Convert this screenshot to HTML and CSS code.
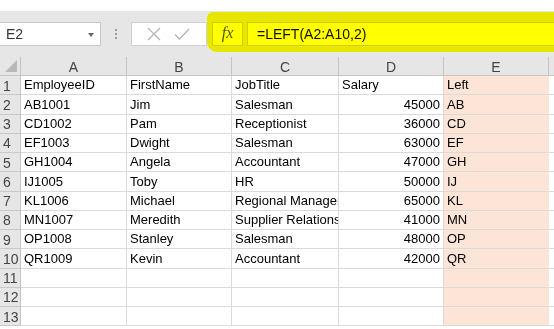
FILE: index.html
```html
<!DOCTYPE html>
<html>
<head>
<meta charset="utf-8">
<link rel="stylesheet" href="styles.css">
</head>
<body>
<div class="topgap"></div>
<div class="toolbar">
  <div class="namebox"><span class="nb-text">E2</span><span class="nb-arrow"></span></div>
  <div class="grip"><i></i><i></i><i></i></div>
  <div class="btns">
    <svg class="ico" width="16" height="16" viewBox="0 0 16 16"><path d="M2 2 L14 14 M14 2 L2 14" stroke="#b4b4b4" stroke-width="1.3" fill="none"/></svg>
    <svg class="ico" width="18" height="16" viewBox="0 0 18 16"><path d="M2 8.5 L6.5 13 L16 3" stroke="#b4b4b4" stroke-width="1.3" fill="none"/></svg>
  </div>
  <div class="fx">fx</div>
  <div class="formula">=LEFT(A2:A10,2)</div>
  <div class="highlight"></div>
</div>
<div class="sheet">
  <div class="hd corner"><span class="tri"></span></div>
  <div class="hd col">A</div><div class="hd col">B</div><div class="hd col">C</div><div class="hd col">D</div><div class="hd col">E</div><div class="hd col last"></div>

  <div class="hd rowh">1</div><div class="c">EmployeeID</div><div class="c">FirstName</div><div class="c">JobTitle</div><div class="c">Salary</div><div class="c e">Left</div><div class="c last"></div>
  <div class="hd rowh">2</div><div class="c">AB1001</div><div class="c">Jim</div><div class="c">Salesman</div><div class="c n">45000</div><div class="c e">AB</div><div class="c last"></div>
  <div class="hd rowh">3</div><div class="c">CD1002</div><div class="c">Pam</div><div class="c">Receptionist</div><div class="c n">36000</div><div class="c e">CD</div><div class="c last"></div>
  <div class="hd rowh">4</div><div class="c">EF1003</div><div class="c">Dwight</div><div class="c">Salesman</div><div class="c n">63000</div><div class="c e">EF</div><div class="c last"></div>
  <div class="hd rowh">5</div><div class="c">GH1004</div><div class="c">Angela</div><div class="c">Accountant</div><div class="c n">47000</div><div class="c e">GH</div><div class="c last"></div>
  <div class="hd rowh">6</div><div class="c">IJ1005</div><div class="c">Toby</div><div class="c">HR</div><div class="c n">50000</div><div class="c e">IJ</div><div class="c last"></div>
  <div class="hd rowh">7</div><div class="c">KL1006</div><div class="c">Michael</div><div class="c">Regional Manager</div><div class="c n">65000</div><div class="c e">KL</div><div class="c last"></div>
  <div class="hd rowh">8</div><div class="c">MN1007</div><div class="c">Meredith</div><div class="c">Supplier Relations</div><div class="c n">41000</div><div class="c e">MN</div><div class="c last"></div>
  <div class="hd rowh">9</div><div class="c">OP1008</div><div class="c">Stanley</div><div class="c">Salesman</div><div class="c n">48000</div><div class="c e">OP</div><div class="c last"></div>
  <div class="hd rowh">10</div><div class="c">QR1009</div><div class="c">Kevin</div><div class="c">Accountant</div><div class="c n">42000</div><div class="c e">QR</div><div class="c last"></div>
  <div class="hd rowh">11</div><div class="c"></div><div class="c"></div><div class="c"></div><div class="c"></div><div class="c e"></div><div class="c last"></div>
  <div class="hd rowh">12</div><div class="c"></div><div class="c"></div><div class="c"></div><div class="c"></div><div class="c e"></div><div class="c last"></div>
  <div class="hd rowh">13</div><div class="c"></div><div class="c"></div><div class="c"></div><div class="c"></div><div class="c e"></div><div class="c last"></div>
</div>
</body>
</html>
```

FILE: styles.css
```css
* { box-sizing: border-box; }
html, body { margin: 0; padding: 0; background: #fff; overflow: hidden; }
body { width: 554px; height: 329px; font-family: "Liberation Sans", Arial, sans-serif; color: #000; }

.topgap { height: 11px; background: #fff; }

.toolbar {
  position: relative;
  height: 46px;
  background: #e6e6e6;
  display: flex;
  align-items: flex-start;
  padding-top: 11px;
}

.namebox {
  width: 102px;
  height: 24px;
  margin-left: -1px;
  background: #fff;
  border: 1px solid #c6c6c6;
  display: flex;
  align-items: center;
  justify-content: space-between;
  padding: 0 6px 0 6px;
  font-size: 14px;
  color: #333;
}
.nb-arrow {
  width: 0; height: 0;
  border-left: 3.5px solid transparent;
  border-right: 3.5px solid transparent;
  border-top: 4px solid #666;
  margin-top: 1px;
}

.grip {
  width: 30px;
  height: 24px;
  display: flex;
  flex-direction: column;
  align-items: center;
  justify-content: center;
  gap: 2px;
}
.grip i { display: block; width: 2px; height: 2px; background: #9a9a9a; }

.btns {
  width: 76px;
  height: 24px;
  background: #fff;
  border: 1px solid #d0d0d0;
  display: flex;
  align-items: center;
  justify-content: space-around;
  padding: 0 10px 0 8px;
}
.ico { display: block; }

.fx {
  margin-left: 5px;
  width: 31px;
  height: 24px;
  background: #fff;
  border: 1px solid #d0d0d0;
  font-family: "Liberation Serif", serif;
  font-style: italic;
  font-size: 16px;
  color: #555;
  display: flex;
  align-items: center;
  justify-content: center;
  padding-bottom: 2px;
}

.formula {
  margin-left: 4px;
  flex: 1;
  height: 24px;
  margin-right: -10px;
  background: #fff;
  border: 1px solid #d0d0d0;
  font-size: 14px;
  padding: 0 0 0 9px;
  display: flex;
  align-items: center;
  color: #111;
}

.highlight {
  position: absolute;
  left: 207px;
  top: 1px;
  width: 360px;
  height: 40px;
  background: #ffff00;
  mix-blend-mode: multiply;
  border-radius: 6px 0 0 10px;
  pointer-events: none;
}

.sheet {
  display: grid;
  grid-template-columns: 21px 106px 105px 107px 105px 105px 20px;
  grid-template-rows: 19px repeat(13, 19.25px);
  font-size: 13px;
}

.hd {
  background: #e6e6e6;
  color: #444;
  display: flex;
  align-items: center;
  justify-content: center;
}
.col { border-right: 1px solid #c4c4c4; border-bottom: 1px solid #c4c4c4; font-size: 14px; padding-top: 1px; }
.corner { border-right: 1px solid #c4c4c4; border-bottom: 1px solid #c4c4c4; position: relative; }
.tri {
  position: absolute;
  right: 3px; bottom: 3px;
  width: 0; height: 0;
  border-left: 12px solid transparent;
  border-bottom: 12px solid #b8b8b8;
}
.rowh { border-bottom: 1px solid #c9c9c9; border-right: 1px solid #c4c4c4; font-size: 14px; justify-content: flex-start; padding-left: 3px; padding-top: 1px; }

.c {
  border-right: 1px solid #dadada;
  border-bottom: 1px solid #dadada;
  padding: 0 3px;
  white-space: nowrap;
  overflow: hidden;
  display: flex;
  align-items: flex-end;
  padding-bottom: 1px;
  line-height: 16px;
}
.c.n { justify-content: flex-end; }
.c.e { background: #fce4d6; border-right-color: #fce4d6; }
.c.last { border-right: none; }
```
